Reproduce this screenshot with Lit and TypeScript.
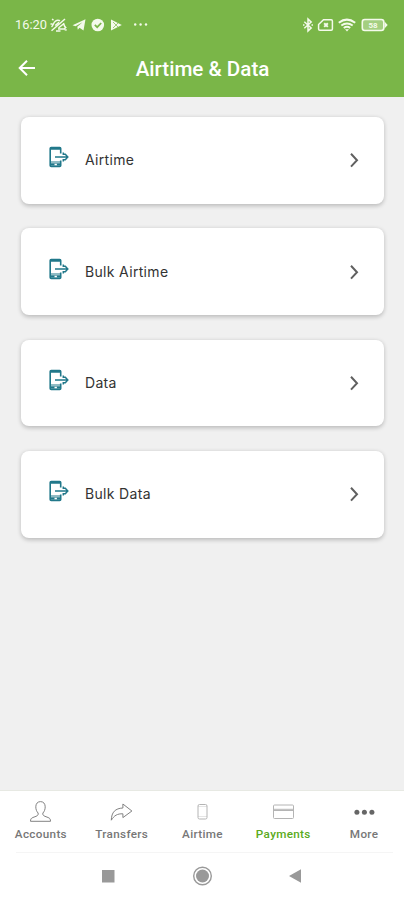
import { LitElement, html, css, svg } from "lit";
import { customElement, property } from "lit/decorators.js";

const tabIcons: Record<string, unknown> = {
  accounts: svg`<path d="M12.500 1.600c-3 0-4.700 2.200-4.700 5.200 0 2.700.9 4.800 2.300 6.200.4 1.700-.3 2.600-2 3.300l-3.200 1.200C3.200 18.200 2.500 19 2.500 21.300h20c0-2.300-.7-3.100-2.400-3.800l-3.200-1.200c-1.700-.7-2.400-1.600-2-3.300 1.400-1.400 2.300-3.500 2.300-6.200 0-3-1.700-5.200-4.700-5.200z"/>`,
  transfers: svg`<path d="M2.300 20.200c.2-8 4-11.900 11.600-12.200V4l9 7-9 6.600v-3.800c-5.500-.2-8.700 1.600-11.600 6.400z"/>`,
  airtime: svg`<rect x="8" y="4.500" width="9" height="14.500" rx="1.500"/><path d="M8 6.500h9M8 16.500h9" opacity=".35"/>`,
  payments: svg`<rect x="2.500" y="5" width="20" height="13.500" rx="1"/><path d="M2.500 9.300h20M2.500 10.500h20"/>`,
  more: svg`<g fill="#666" stroke="none"><circle cx="4.900" cy="12.200" r="2.500"/><circle cx="12.400" cy="12.200" r="2.500"/><circle cx="19.900" cy="12.200" r="2.500"/></g>`,
};

@customElement("status-bar")
class StatusBar extends LitElement {
  static styles = css`
    :host { display: flex; height: 24px; margin-top: 12.500px; padding: 0 15.500px 0 15px; align-items: center; justify-content: space-between; color: #f4faeb; }
    .group { display: flex; align-items: center; }
    .time { font: 400 12.800px/24px Roboto, sans-serif; width: 33px; white-space: nowrap; }
    svg { display: block; fill: none; stroke: currentColor; }
    .solid { fill: currentColor; stroke: none; }
    .level { fill: #f4faeb; stroke: none; font: 700 8px Roboto, sans-serif; }
  `;
  render() {
    return html`
      <div class="group">
        <span class="time">16:20</span>
        <svg width="22" height="18" viewBox="0 0 22 18" stroke-width="1.500"><path d="M3.500 10.800c2-1.500 1.500-4 4-5.700 1.500-1 3-1 4.500-.3M15.500 7c.7 1.700.4 3 2.200 4.600l-1.500 1.400H10M3.500 14.800L17 3M5.500 4L4 3.200M2.500 8h2M8 15h4.500M7.200 9.500l3.800-3.300M10.500 12l5.500-4.500M16.700 13.800l2 .3"/></svg>
        <svg class="solid" width="18" height="18" viewBox="0 0 18 18"><path d="M2.500 9.300L15.500 3.300 13.500 14.500 9.500 11.700 7.800 13.800 7.300 10.800 12.500 6.200 5.500 10.300z"/></svg>
        <svg class="solid" width="19" height="18" viewBox="0 0 19 18"><circle cx="9.800" cy="9" r="6.300"/><path d="M6.800 8.800l2.400 2.400 4-4.200" fill="none" stroke="#7ab648" stroke-width="1.700"/></svg>
        <svg class="solid" width="18" height="18" viewBox="0 0 18 18"><path d="M4 3.500L14.800 9 4 14.500z"/><path d="M6 6L11 11M6 12L11 7" stroke="#7ab648" stroke-width=".7"/></svg>
        <svg class="solid" width="24" height="18" viewBox="0 0 24 18"><circle cx="10.200" cy="8.500" r="1.200"/><circle cx="15.600" cy="8.500" r="1.200"/><circle cx="21" cy="8.500" r="1.200"/></svg>
      </div>
      <div class="group">
        <svg width="16" height="18" viewBox="0 0 16 18" stroke-width="1.500"><path d="M3.300 5.700l6.900 6.200L7 15V3l3.200 3.100-6.900 6.200M2 9h1.500M10.500 9H12"/></svg>
        <svg width="18" height="18" viewBox="0 0 18 18" stroke-width="1.500"><path d="M6.500 3.800h7.700q1.200 0 1.200 1.200v8q0 1.200-1.200 1.200H2.800q-1.200 0-1.200-1.200V8.500z"/><path d="M7.200 7.300l3.600 3.600M10.800 7.300l-3.600 3.600" stroke-width="2"/></svg>
        <svg width="25" height="18" viewBox="0 0 25 18" stroke-width="2"><path d="M3.800 6.700q8-6.200 16.400 0M6.300 9.500q5.700-4.200 11.400 0M8.800 12q3.200-2.400 6.400 0"/><path d="M10 13.200h4l-2 2.300z" fill="currentColor" stroke="none"/></svg>
        <svg width="29" height="18" viewBox="0 0 29 18" stroke-width="1.600"><rect x="2.300" y="3.500" width="21.500" height="11" rx="2.500" fill="#a4cf80"/><path d="M24.500 5.500v7l3.200-3.500z" fill="currentColor" stroke="none"/><text class="level" x="13" y="12" text-anchor="middle">58</text></svg>
      </div>`;
  }
}

@customElement("menu-card")
class MenuCard extends LitElement {
  @property() label = "";
  static styles = css`
    :host { display: flex; box-sizing: border-box; height: 86.500px; align-items: center; padding: 0 22px 0 27px; border-radius: 8px; background: #fff; box-shadow: 0 1.500px 4px rgba(0, 0, 0, .22); }
    .phone { width: 22px; height: 22px; margin-top: -6px; flex: none; fill: none; stroke: #21788a; }
    .label { flex: 1; margin-left: 15px; font: 400 14px/20px Inter, sans-serif; letter-spacing: .33px; color: #333; }
    .chevron { width: 16px; height: 20px; fill: none; stroke: #606060; stroke-width: 2; }
  `;
  render() {
    return html`
      <svg class="phone" viewBox="0 0 22 22"><path d="M12.700 7.500V2.500q0-1-1-1H3.200q-1 0-1 1v17q0 1 1 1h8.500q1 0 1-1V14.500" stroke-width="1.600"/><path d="M2.500 2.500h10M2.500 18.500h10" stroke-width="2.600"/><path d="M2.500 16h10" stroke-width="1"/><path d="M7 11h12.500M15.300 6.500v1.800h2l2.500 2.700-2.500 2.700h-2v1.800" stroke-width="1.500"/><path d="M6.500 18.500h2.400" stroke="#fff" stroke-width="1.500"/></svg>
      <span class="label">${this.label}</span>
      <svg class="chevron" viewBox="0 0 16 20"><path d="M5 3.800l6 6.400-6 6.400"/></svg>`;
  }
}

@customElement("tab-item")
class TabItem extends LitElement {
  @property() label = "";
  @property() icon = "";
  static styles = css`
    :host { display: flex; flex: 1; flex-direction: column; align-items: center; color: #777; }
    :host([active]) { color: #5aaa20; }
    svg { width: 24px; height: 24px; margin-top: 9px; fill: none; stroke: #828282; stroke-width: 1; }
    :host([icon="airtime"]) svg, :host([icon="payments"]) svg { stroke: #b4b4b4; }
    span { font: 500 11.700px/16px Roboto, sans-serif; letter-spacing: .33px; margin: 2px 0 0 1px; white-space: nowrap; }
  `;
  render() {
    return html`<svg viewBox="0 0 24 24">${tabIcons[this.icon]}</svg><span>${this.label}</span>`;
  }
}

@customElement("app-root")
class AppRoot extends LitElement {
  static styles = css`
    :host { display: flex; flex-direction: column; width: 100%; height: 900px; background: #f0f0f0; overflow: hidden; }
    header { display: flex; flex-direction: column; height: 97px; flex: none; background: #7ab648; }
    .title-row { display: grid; grid-template-columns: 54px 1fr 54px; align-items: center; height: 66px; margin-top: -1px; }
    .back { width: 24px; height: 24px; margin: 4px 0 0 15px; fill: none; stroke: #fff; stroke-width: 2; }
    h1 { margin: 6px 0 0; padding-left: 1px; text-align: center; font: 500 20.600px/26px Roboto, sans-serif; color: #fff; }
    main { display: flex; flex: 1; flex-direction: column; gap: 24.800px; padding: 20.200px 20px 0 21px; }
    nav { display: flex; height: 61px; flex: none; background: #fff; border-top: 1px solid #e7e9e3; }
    .system { display: flex; height: 48px; flex: none; padding: 0 11px 0 16px; background: #fff; }
    .keys { display: flex; flex: 1; justify-content: center; align-items: center; gap: 70px; padding: 0 5px 2px 0; border-top: 1px solid #f5f5f5; }
    .keys svg { width: 24px; height: 24px; fill: #999; }
  `;
  render() {
    return html`
      <header>
        <status-bar></status-bar>
        <div class="title-row">
          <svg class="back" viewBox="0 0 24 24"><path d="M20 12H5M12 4.700L4.700 12l7.300 7.300"/></svg>
          <h1>Airtime &amp; Data</h1>
        </div>
      </header>
      <main>
        ${["Airtime", "Bulk Airtime", "Data", "Bulk Data"].map((l) => html`<menu-card label=${l}></menu-card>`)}
      </main>
      <nav>
        <tab-item icon="accounts" label="Accounts"></tab-item>
        <tab-item icon="transfers" label="Transfers"></tab-item>
        <tab-item icon="airtime" label="Airtime"></tab-item>
        <tab-item icon="payments" label="Payments" active></tab-item>
        <tab-item icon="more" label="More"></tab-item>
      </nav>
      <div class="system">
        <div class="keys">
          <svg viewBox="0 0 24 24"><rect x="6" y="6" width="12.500" height="12.500"/></svg>
          <svg viewBox="0 0 24 24"><circle cx="12.500" cy="12" r="6.500"/><circle cx="12.500" cy="12" r="8.800" fill="none" stroke="#999" stroke-width="1.400"/></svg>
          <svg viewBox="0 0 24 24"><path d="M5 12l12-6.800v13.600z"/></svg>
        </div>
      </div>`;
  }
}
